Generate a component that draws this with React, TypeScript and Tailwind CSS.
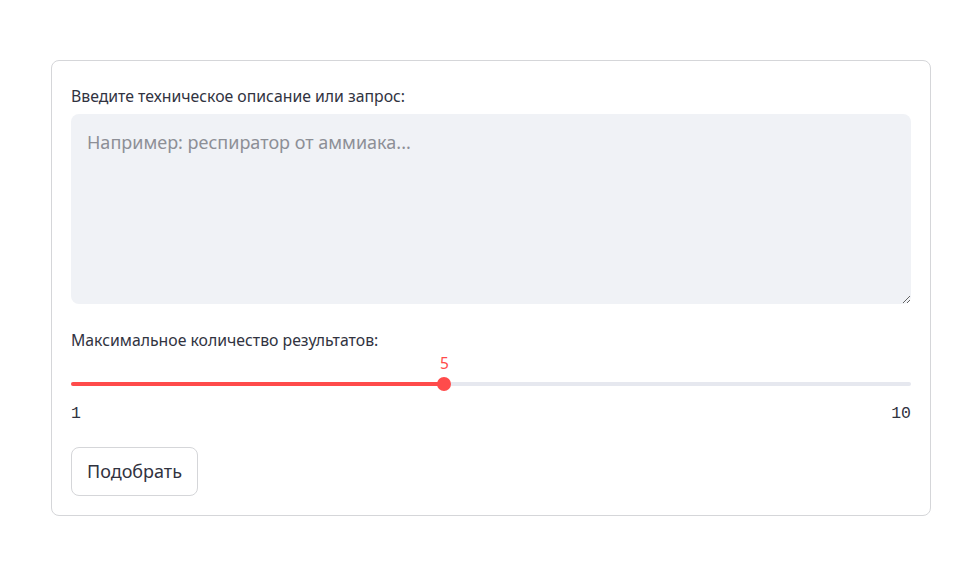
export default function App() {
  const min = 1;
  const max = 10;
  const value = 5;
  const pct = ((value - min) / (max - min)) * 100;

  return (
    <div className="min-h-[571px] w-full bg-white pl-[51px] pr-[44px] pt-[60px] font-['Noto_Sans',sans-serif] text-[#31333f]">
      <form className="flex flex-col rounded-lg border border-[#d5d6d9] px-[19px] pt-[24px] pb-[19px]">
        <label className="text-[15.8px] leading-[22px]">Введите техническое описание или запрос:</label>
        <textarea
          placeholder="Например: респиратор от аммиака..."
          className="mt-[7px] h-[190px] w-full resize-y rounded-lg bg-[#f0f2f6] px-[16px] py-[15px] text-[18px] leading-[26px] text-[#31333f] outline-none placeholder:text-[#8d8f96]"
        />
        <label className="mt-[25px] text-[15.8px] leading-[22px]">Максимальное количество результатов:</label>
        <div className="relative h-[53px]">
          <div className="absolute top-[31px] h-[4px] w-full rounded-full bg-[#e6e8ef]" />
          <div className="absolute top-[31px] h-[4px] rounded-full bg-[#ff4b4b]" style={{ width: `${pct}%` }} />
          <div
            className="absolute top-[26px] h-[14px] w-[14px] -translate-x-1/2 rounded-full bg-[#ff4b4b]"
            style={{ left: `${pct}%` }}
          />
          <div
            className="absolute top-[2px] -translate-x-1/2 text-[15.5px] leading-[20px] text-[#ff4b4b]"
            style={{ left: `${pct}%` }}
          >
            {value}
          </div>
        </div>
        <div className="flex justify-between font-['Liberation_Mono',monospace] text-[16.5px] leading-[20px]">
          <span>{min}</span>
          <span>{max}</span>
        </div>
        <div className="mt-[23px]">
          <button
            type="button"
            className="h-[49px] rounded-lg border border-[#d5d6d9] bg-white px-[15px] text-[18px] text-[#31333f]"
          >
            Подобрать
          </button>
        </div>
      </form>
    </div>
  );
}
